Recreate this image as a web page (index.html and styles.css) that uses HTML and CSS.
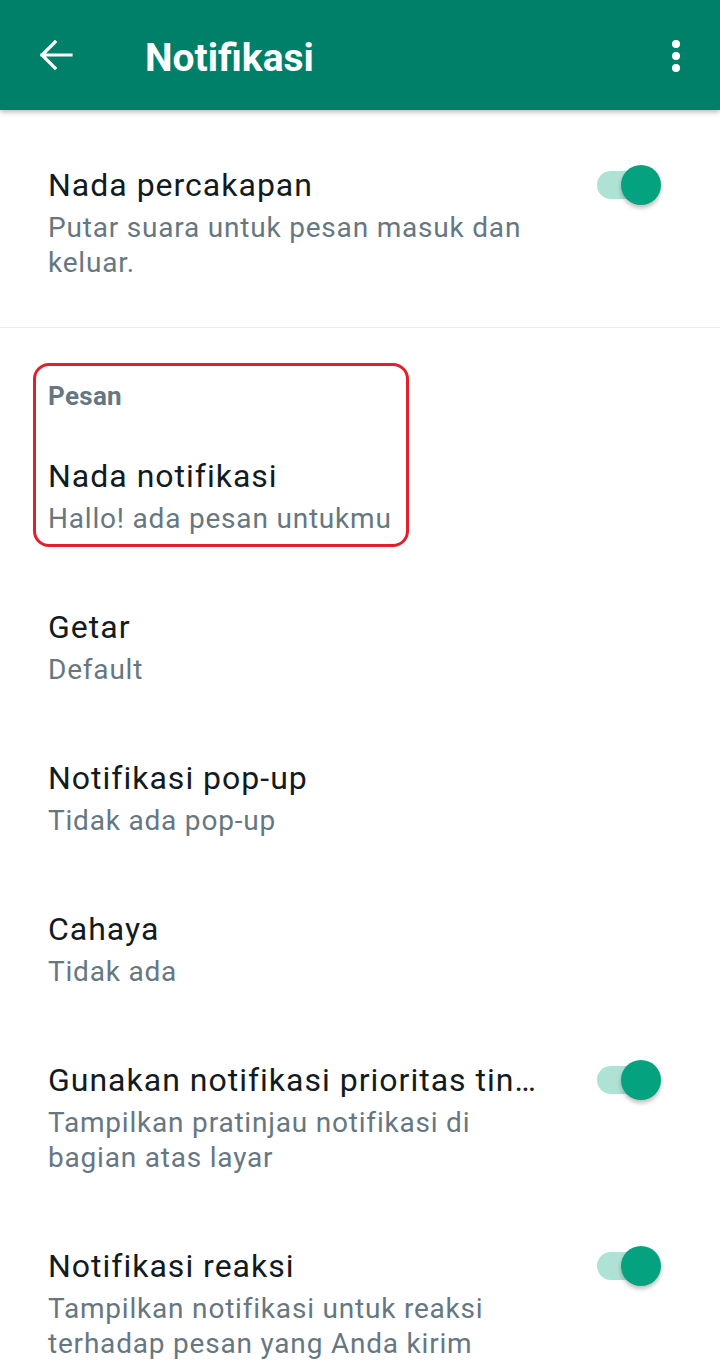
FILE: index.html
```html
<!DOCTYPE html>
<html lang="id">
<head>
<meta charset="utf-8">
<title>Notifikasi</title>
<link rel="stylesheet" href="styles.css">
</head>
<body>
<div class="app">
  <header class="appbar">
    <svg class="back" width="34" height="32" viewBox="0 0 34 32"><path d="M32 16H3M16 3L3 16l13 13" fill="none" stroke="#fff" stroke-width="3.2" stroke-linecap="square" stroke-linejoin="miter"/></svg>
    <h1 class="title">Notifikasi</h1>
    <div class="menu"><span></span><span></span><span></span></div>
  </header>

  <section class="group first">
    <div class="item">
      <div class="text">
        <div class="label">Nada percakapan</div>
        <div class="sub">Putar suara untuk pesan masuk dan<br>keluar.</div>
      </div>
      <div class="switch"><span class="track"></span><span class="thumb"></span></div>
    </div>
  </section>

  <section class="group">
    <div class="section-head">Pesan</div>
    <div class="item">
      <div class="text">
        <div class="label">Nada notifikasi</div>
        <div class="sub">Hallo! ada pesan untukmu</div>
      </div>
    </div>
    <div class="highlight"></div>
    <div class="item">
      <div class="text">
        <div class="label">Getar</div>
        <div class="sub">Default</div>
      </div>
    </div>
    <div class="item">
      <div class="text">
        <div class="label">Notifikasi pop-up</div>
        <div class="sub">Tidak ada pop-up</div>
      </div>
    </div>
    <div class="item">
      <div class="text">
        <div class="label">Cahaya</div>
        <div class="sub">Tidak ada</div>
      </div>
    </div>
    <div class="item">
      <div class="text">
        <div class="label">Gunakan notifikasi prioritas tin…</div>
        <div class="sub">Tampilkan pratinjau notifikasi di<br>bagian atas layar</div>
      </div>
      <div class="switch"><span class="track"></span><span class="thumb"></span></div>
    </div>
    <div class="item">
      <div class="text">
        <div class="label">Notifikasi reaksi</div>
        <div class="sub">Tampilkan notifikasi untuk reaksi<br>terhadap pesan yang Anda kirim</div>
      </div>
      <div class="switch"><span class="track"></span><span class="thumb"></span></div>
    </div>
  </section>
</div>
</body>
</html>
```

FILE: styles.css
```css
* { box-sizing: border-box; }
html, body { margin: 0; padding: 0; background: #fff; }
body { font-family: Roboto, "Noto Sans", sans-serif; width: 720px; height: 1369px; overflow: hidden; }

.app { position: relative; }

.appbar {
  height: 110px;
  background: #008069;
  display: flex;
  align-items: center;
  padding: 0 0 0 39px;
  box-shadow: 0 2px 5px rgba(0,0,0,0.28);
  position: relative;
  z-index: 2;
}
.back { display: block; flex: none; margin-top: 0; }
.title {
  margin: 6px 0 0 72px;
  color: #fff;
  font-size: 39px;
  font-weight: 700;
  flex: 1;
  line-height: 1;
}
.menu {
  width: 16px;
  margin-right: 36px;
  display: flex;
  flex-direction: column;
  align-items: center;
  gap: 4px;
  margin-top: 2px;
}
.menu span { width: 8px; height: 8px; border-radius: 50%; background: #fff; display: block; }

.group { position: relative; }
.group.first { border-bottom: 1px solid #e9edef; }
.group.first .item { padding: 53px 0 47px 48px; }

.section-head {
  padding: 53px 0 9px 48px;
  font-size: 26px;
  line-height: 30px;
  font-weight: 700;
  color: #667781;
  letter-spacing: 0.3px;
}

.item {
  display: flex;
  align-items: flex-start;
  padding: 34px 0 35px 48px;
}
.text { flex: 1; min-width: 0; }
.label {
  font-size: 32px;
  line-height: 44px;
  color: #111b21;
  margin-bottom: 3px;
  letter-spacing: 1px;
  white-space: nowrap;
}
.sub {
  font-size: 28px;
  line-height: 35px;
  color: #667781;
  letter-spacing: 0.8px;
}

.switch {
  position: relative;
  width: 66px;
  height: 44px;
  margin: 0 57px 0 40px;
  flex: none;
}
.track {
  position: absolute;
  left: 0;
  top: 8px;
  width: 58px;
  height: 28px;
  border-radius: 14px;
  background: #aee2d4;
}
.thumb {
  position: absolute;
  left: 24px;
  top: 2px;
  width: 40px;
  height: 40px;
  border-radius: 50%;
  background: #05a27f;
  box-shadow: 0 3px 4px rgba(0,0,0,0.25);
}

.highlight {
  position: absolute;
  left: 33px;
  top: 35px;
  width: 376px;
  height: 184px;
  border: 3px solid #e2202b;
  border-radius: 16px;
  pointer-events: none;
}
```
